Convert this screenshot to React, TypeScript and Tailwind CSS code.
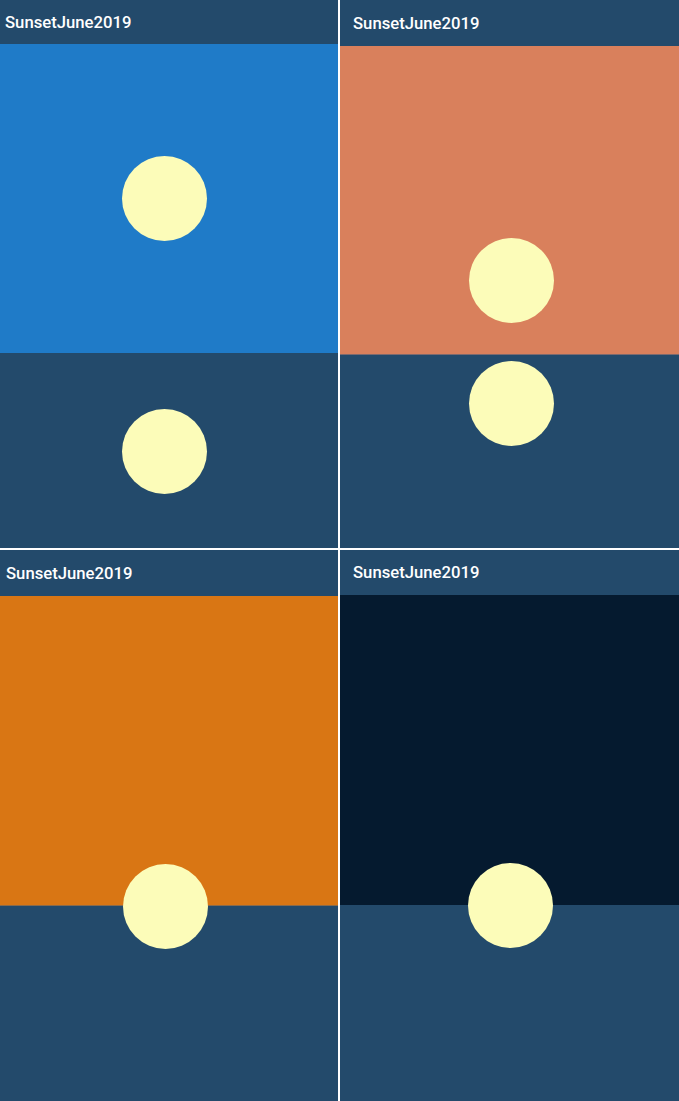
import React from 'react';

interface Scene {
  id: string;
  header: string;
  pad: string;
  sky: string;
  skyHeight: string;
  edge: string;
  suns: { top: string; left: string }[];
}

const scenes: Scene[] = [
  {
    id: 'noon',
    header: 'h-[44px]',
    pad: 'pl-[5px]',
    sky: 'bg-[#1f7bc8]',
    skyHeight: 'h-[309px]',
    edge: 'border-transparent',
    suns: [
      { top: 'top-[156px]', left: 'left-[122px]' },
      { top: 'top-[409px]', left: 'left-[122px]' },
    ],
  },
  {
    id: 'evening',
    header: 'h-[46px]',
    pad: 'pl-[13px]',
    sky: 'bg-[#d9805c]',
    skyHeight: 'h-[309px]',
    edge: 'border-[#7d6a6e]',
    suns: [
      { top: 'top-[238px]', left: 'left-[129px]' },
      { top: 'top-[361px]', left: 'left-[129px]' },
    ],
  },
  {
    id: 'sunset',
    header: 'h-[46px]',
    pad: 'pl-[6px]',
    sky: 'bg-[#d97614]',
    skyHeight: 'h-[310px]',
    edge: 'border-[#8a6a4a]',
    suns: [{ top: 'top-[314px]', left: 'left-[123px]' }],
  },
  {
    id: 'night',
    header: 'h-[45px]',
    pad: 'pl-[13px]',
    sky: 'bg-[#051a2f]',
    skyHeight: 'h-[310px]',
    edge: 'border-transparent',
    suns: [{ top: 'top-[313px]', left: 'left-[128px]' }],
  },
];

const Panel: React.FC<{ scene: Scene }> = ({ scene }) => (
  <div className="relative flex flex-col overflow-hidden bg-[#234a6b]">
    <div className={`${scene.header} ${scene.pad} flex items-center bg-[#234a6b]`}>
      <span className="text-[16.7px] font-medium text-white leading-none pt-[2px]">SunsetJune2019</span>
    </div>
    <div className={`${scene.skyHeight} ${scene.sky} border-b ${scene.edge}`} />
    <div className="flex-1 bg-[#234a6b]" />
    {scene.suns.map((s, i) => (
      <div
        key={i}
        className={`absolute ${s.top} ${s.left} w-[85px] h-[85px] rounded-full bg-[#fcfcb9]`}
      />
    ))}
  </div>
);

export default function App() {
  return (
    <div
      className="w-[679px] h-[1101px] grid grid-cols-[338px_1fr] grid-rows-[548px_1fr] gap-[2px] bg-white"
      style={{ fontFamily: 'Roboto, "Liberation Sans", sans-serif' }}
    >
      {scenes.map((s) => (
        <Panel key={s.id} scene={s} />
      ))}
    </div>
  );
}
